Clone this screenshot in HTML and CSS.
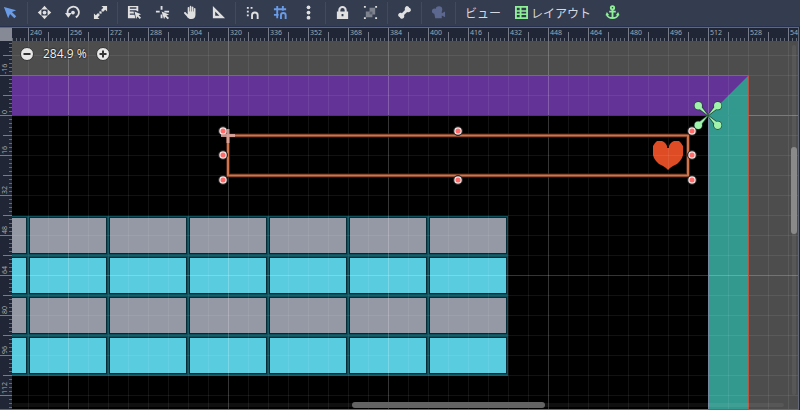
FILE: index.html
```html
<!DOCTYPE html>
<html lang="ja">
<head>
<meta charset="utf-8">
<title>2D Editor</title>
<link rel="stylesheet" href="styles.css">
</head>
<body>
<header class="toolbar">
  <button class="tool" aria-label="Select"><svg viewBox="0 0 16 16"><path fill="#699ce8" d="M1 2l4.500 12 2-4.500 4.600 4.600 2-2L9.500 7.500l4.500-2z"/></svg></button>
  <span class="sep"></span>
  <button class="tool" aria-label="Move"><svg viewBox="0 0 16 16"><circle cx="8" cy="8" r="2"/><path d="M8 .8l3.500 3.900h-7zM8 15.200l3.500-3.900h-7zM.8 8l3.900-3.500v7zM15.200 8l-3.900-3.500v7z"/></svg></button>
  <button class="tool" aria-label="Rotate"><svg viewBox="0 0 16 16"><circle cx="8.500" cy="8" r="2"/><path class="line" d="M11.500 13.200A6 6 0 1 0 3 9.500"/><path d="M0 8.500h7l-3.500 5z"/></svg></button>
  <button class="tool" aria-label="Scale"><svg viewBox="0 0 16 16"><path d="M9 1h6v6l-2-2-2.400 2.400-2-2L11 3zM7 15H1V9l2 2 2.400-2.400 2 2L5 13z"/><rect x="6.800" y="6.800" width="2.400" height="2.400"/></svg></button>
  <span class="sep"></span>
  <button class="tool" aria-label="List select"><svg viewBox="0 0 16 16"><path fill-rule="evenodd" d="M1 1h11v6l-2-1V5.500H3V7h4l.5 2H3v1.500h5l1 3.500H1zM3 2.500V4h7V2.500z"/><path d="M8 7l7 2.800-2.600 1.100 2.600 2.600-1.400 1.400-2.600-2.600-1.100 2.500z"/></svg></button>
  <button class="tool" aria-label="Pivot"><svg viewBox="0 0 16 16"><path d="M6 1h2v4H6zM1 6h4v2H1zM10 6h5v2h-5zM6 10h2v4H6z"/><path d="M7 7l8 3-2.900 1.200 2.900 2.600-1.500 1.500-2.700-2.800-1.100 2.700z"/></svg></button>
  <button class="tool" aria-label="Pan"><svg viewBox="0 0 16 16"><path d="M7.200 1.800c0-1.200 1.700-1.200 1.700 0V7h.5V2.500c0-1.200 1.700-1.200 1.700 0V7h.5V4c0-1.200 1.700-1.200 1.700 0v6.500c0 3-1.500 4.500-4.300 4.500-2.600 0-4-1-5-3L1.200 9c-.5-1.200 1-2 1.800-1L5 10V3c0-1.200 1.700-1.200 1.700 0v4h.5z"/></svg></button>
  <button class="tool" aria-label="Ruler"><svg viewBox="0 0 16 16"><path fill-rule="evenodd" d="M2 1l13 13H2zM4.500 7v4.500H9z"/></svg></button>
  <span class="sep"></span>
  <button class="tool" aria-label="Smart snap"><svg viewBox="0 0 16 16"><path d="M2 2h2v2H2zM6 2h2v2H6zM2 6h2v2H2zM2 10h2v2H2z"/><path class="line" d="M7.500 15v-4a3 3 0 0 1 6 0v4"/></svg></button>
  <button class="tool snap-on" aria-label="Grid snap"><svg viewBox="0 0 16 16"><path class="line" d="M4.500 1v13M10.500 1v5M1 4.500h13M1 10.500h5M8.500 15v-4a2.500 2.500 0 0 1 5 0v4"/></svg></button>
  <button class="tool" aria-label="Snap options"><svg viewBox="0 0 16 16"><circle cx="8" cy="2.500" r="2"/><circle cx="8" cy="8" r="2"/><circle cx="8" cy="13.500" r="2"/></svg></button>
  <span class="sep"></span>
  <button class="tool" aria-label="Lock"><svg viewBox="0 0 16 16"><path fill-rule="evenodd" d="M3.500 7V5.500a4.500 4.500 0 0 1 9 0V7H14v8H2V7zM5.700 7h4.600V5.500a2.300 2.300 0 0 0-4.600 0zM7 9.500V12h2V9.500z"/></svg></button>
  <button class="tool" aria-label="Group"><svg viewBox="0 0 16 16"><path fill="#7e828f" d="M7 3h6v7h-3v3H3V7h4z"/><path fill="#5a6070" d="M7 7h3v3H7z"/><path d="M1 1h2v2H1zM13 1h2v2h-2zM1 13h2v2H1zM13 13h2v2h-2z"/></svg></button>
  <span class="sep"></span>
  <button class="tool" aria-label="Skeleton"><svg viewBox="0 0 16 16"><path d="M9 2a2.300 2.300 0 0 1 4 1 2.300 2.300 0 0 1 1 4c-1 1-2.300 1-3.200.4L7.500 10.600C8 12 7.800 13 7 13.800a2.300 2.300 0 0 1-4-.8 2.300 2.300 0 0 1-1-4c1-.9 2-.8 3.200-.3L8.500 5.300C8.100 4 8.200 2.900 9 2z"/></svg></button>
  <span class="sep"></span>
  <button class="tool dim" aria-label="Camera override"><svg viewBox="0 0 16 16"><circle cx="8.500" cy="4.800" r="3.500"/><circle cx="3.800" cy="6.500" r="2.800"/><path d="M3 7h8.500v1.800L15 7v6l-3.500-1.800V14H4.500z"/></svg></button>
  <span class="sep"></span>
  <button class="menu">ビュー</button>
  <button class="menu"><svg class="layout-icon" viewBox="0 0 14 14"><path fill-rule="evenodd" d="M0 0h14v14H0zM2 2v2.500h3V2zM7 2v2.500h5V2zM2 6.200V8h3V6.200zM7 6.200V8h5V6.200zM2 9.800V12h3V9.800zM7 9.800V12h5V9.800z"/></svg>レイアウト</button>
  <button class="tool green" aria-label="Anchors"><svg viewBox="0 0 16 16"><circle class="line" cx="8" cy="3" r="1.800"/><path class="line" d="M8 5v9M4.500 7h7M2 9.500c0 3 3 4.500 6 4.500s6-1.500 6-4.500"/><path d="M.5 11L2 7.500 4.500 11zM15.500 11L14 7.500 11.500 11z"/></svg></button>
</header>
<main class="editor">
  <div class="corner"></div>
  <div class="ruler ruler-top">
    <span></span><span>240</span><span>256</span><span>272</span><span>288</span><span>304</span><span>320</span><span>336</span><span>352</span><span>368</span><span>384</span><span>400</span><span>416</span><span>432</span><span>448</span><span>464</span><span>480</span><span>496</span><span>512</span><span>528</span><span>544</span>
  </div>
  <div class="ruler ruler-left">
    <span>-16</span><span>0</span><span>16</span><span>32</span><span>48</span><span>64</span><span>80</span><span>96</span><span>112</span><span></span>
  </div>
  <section class="viewport">
    <svg class="scene" role="img" aria-label="Scene">
      <defs>
        <pattern id="grid" x="28" y="15" width="20" height="20" patternUnits="userSpaceOnUse"><path d="M0 .5h20M.5 0v20" stroke="#fff" stroke-opacity=".07"/></pattern>
        <pattern id="grid-major" x="68" y="115" width="160" height="160" patternUnits="userSpaceOnUse"><path d="M0 .5h160M.5 0v160" stroke="#fff" stroke-opacity=".15"/></pattern>
        <pattern id="bricks" x="28" y="216" width="80" height="80" patternUnits="userSpaceOnUse">
          <rect width="80" height="80" fill="#0d515d"/>
          <path fill="#042b35" d="M1 1h78v37H1zM1 41h78v37H1z"/>
          <path fill="#9599a5" d="M2 2h76v35H2z"/>
          <path fill="#59cce0" d="M2 42h76v35H2z"/>
        </pattern>
        <g id="handle"><circle r="4.500" fill="#000" stroke="#2a2a2a"/><circle r="3.800" fill="#f5e8e6"/><circle r="2.500" fill="#ff6b6b"/></g>
        <g id="arm"><path d="M0 0L6.500 8.500l2-2z"/><circle cx="9.700" cy="9.700" r="3.700"/></g>
      </defs>
      <g transform="translate(-12 -41)">
        <path fill="#000" d="M0 116h708v1400H0z"/>
        <path fill="#643398" d="M0 76h748l-40 40H0z"/>
        <path fill="#33998f" d="M748 76v1440h-40V116z"/>
        <rect x="-52" y="216" width="560" height="160" fill="url(#bricks)"/>
        <path fill="#dd4c25" d="M657 141h5l2 1 2 2 1 2v2h2v-2l1-2 2-2 2-1h5l2 2 2 3v9l-1 3-2 3-3 3-4 2-3 2-2 2-2-2-3-2-4-2-3-3-2-3-1-3v-9l2-3z"/>
        <rect width="3000" height="2000" fill="url(#grid)"/>
        <rect width="3000" height="2000" fill="url(#grid-major)"/>
        <path fill="none" stroke="#b75545" d="M0 75.500h748.500V2000"/>
        <path stroke="#6f2c35" d="M0 115.500h708"/>
        <path stroke="#a9646c" d="M708 115.500h2300"/>
        <path stroke="#7489a0" d="M708.500 116v1900"/>
        <rect x="228" y="135.500" width="460" height="40" fill="none" stroke="#4a2114" stroke-width="4"/>
        <rect x="228" y="135.500" width="460" height="40" fill="none" stroke="#cf754b" stroke-width="2"/>
        <use href="#handle" x="223" y="131"/><use href="#handle" x="458" y="131"/><use href="#handle" x="692" y="131"/>
        <use href="#handle" x="223" y="155"/><use href="#handle" x="692" y="155"/>
        <use href="#handle" x="223" y="180"/><use href="#handle" x="458" y="180"/><use href="#handle" x="692" y="180"/>
        <path stroke="#ddaaa5" stroke-width="3" stroke-opacity=".85" d="M221 135.500h14M228 129v14"/>
        <g transform="translate(708 115.500)">
          <g fill="#23433a" stroke="#23433a" stroke-width="1.500">
            <use href="#arm"/><use href="#arm" transform="rotate(90)"/><use href="#arm" transform="rotate(180)"/><use href="#arm" transform="rotate(270)"/>
          </g>
          <g fill="#a1f3ac">
            <use href="#arm"/><use href="#arm" transform="rotate(90)"/><use href="#arm" transform="rotate(180)"/><use href="#arm" transform="rotate(270)"/>
          </g>
        </g>
      </g>
    </svg>
    <div class="zoom">
      <button aria-label="Zoom out"><svg viewBox="0 0 14 14"><circle cx="7" cy="7" r="6.500"/><path d="M3.500 7h7"/></svg></button>
      <span>284.9 %</span>
      <button aria-label="Zoom in"><svg viewBox="0 0 14 14"><circle cx="7" cy="7" r="6.500"/><path d="M3.500 7h7M7 3.500v7"/></svg></button>
    </div>
    <div class="scroll scroll-v"><div class="thumb"></div></div>
    <div class="scroll scroll-h"><div class="thumb"></div></div>
  </section>
</main>
</body>
</html>
```
FILE: styles.css
```css
* { box-sizing: border-box; }

body {
  margin: 0;
  height: 100vh;
  display: flex;
  flex-direction: column;
  overflow: hidden;
  background: #1b2747;
  color: #d5d8df;
  font-family: "Noto Sans", "Noto Sans CJK JP", sans-serif;
}

button {
  border: 0;
  padding: 0;
  background: none;
  color: inherit;
  font: inherit;
}

.toolbar {
  flex: none;
  display: flex;
  align-items: center;
  height: 27px;
  padding-bottom: 1px;
  background: #343c50;
  border-bottom: 1px solid #26324f;
}

.tool {
  flex: none;
  display: grid;
  place-items: center;
  width: 28px;
  height: 26px;
  color: #e0e0e0;
}

.tool:first-child { margin-left: -4px; }

.tool svg {
  width: 15px;
  height: 15px;
  fill: currentColor;
}

.tool .line {
  fill: none;
  stroke: currentColor;
  stroke-width: 2;
}

.snap-on { color: #699ce8; }
.dim { color: #5c688f; }
.green { color: #8eef97; }

.sep {
  flex: none;
  width: 1px;
  height: 22px;
  margin: 0 2px 0 3px;
  background: #434a5d;
}

.menu {
  flex: none;
  display: flex;
  align-items: center;
  gap: 3px;
  height: 26px;
  padding: 0 7px;
  font-size: 12px;
  white-space: nowrap;
}

.layout-icon {
  width: 13px;
  height: 13px;
  fill: #8eef97;
}

.editor {
  flex: 1;
  min-height: 0;
  display: grid;
  grid-template: 13px minmax(0, 1fr) / 12px minmax(0, 1fr);
  margin-right: 1px;
  border: solid #626878;
  border-width: 1px 1px 1px 0;
}

.corner { background: #858a96; }

.ruler {
  display: flex;
  overflow: hidden;
  background: #202635;
  color: #a2a6ae;
  font-size: 7px;
  line-height: 10px;
}

.ruler span {
  flex: none;
}

.ruler-top span {
  width: 40px;
  padding-left: 1px;
  border-left: 1px solid #777c88;
  background:
    linear-gradient(#777c88, #777c88) 19px 100% / 1px 9px no-repeat,
    repeating-linear-gradient(to right, transparent 0 3px, #656a77 3px 4px) 0 100% / 100% 3px no-repeat;
}

.ruler-top span:first-child { margin-left: -24px; }

.ruler-left { flex-direction: column; }

.ruler-left span {
  height: 40px;
  writing-mode: vertical-rl;
  transform: rotate(180deg);
  padding-top: 1px;
  border-top: 1px solid #777c88;
  background:
    linear-gradient(#777c88, #777c88) 0 19px / 9px 1px no-repeat,
    repeating-linear-gradient(to bottom, transparent 0 3px, #656a77 3px 4px) 0 0 / 3px 100% no-repeat;
}

.ruler-left span:first-child { margin-top: -5px; }

.viewport {
  position: relative;
  overflow: hidden;
  background: #4d4d4d;
}

.scene {
  display: block;
  width: 100%;
  height: 100%;
}

.zoom {
  position: absolute;
  top: 4px;
  left: 8px;
  display: flex;
  align-items: center;
  gap: 9px;
  color: #eee;
  font-size: 12px;
  line-height: 18px;
  text-shadow: 0 0 1px #000, 0 0 2px #000;
}

.zoom button,
.zoom svg {
  display: block;
  width: 14px;
  height: 14px;
}

.zoom circle {
  fill: #e8e8e8;
  stroke: #333;
}

.zoom path {
  stroke: #333;
  stroke-width: 2;
}

.scroll {
  position: absolute;
  border-radius: 3px;
  background: rgba(255, 255, 255, .06);
}

.scroll .thumb {
  position: absolute;
  border-radius: 3px;
}

.scroll-v {
  top: 4px;
  right: 2px;
  bottom: 14px;
  width: 4px;
}

.scroll-v .thumb {
  top: 29%;
  right: -1px;
  width: 6px;
  height: 25%;
  background: #8a8a8a;
}

.scroll-h {
  left: 0;
  right: 14px;
  bottom: 2px;
  height: 4px;
}

.scroll-h .thumb {
  left: 44%;
  bottom: -1px;
  width: 25%;
  height: 6px;
  background: #646464;
}
```
